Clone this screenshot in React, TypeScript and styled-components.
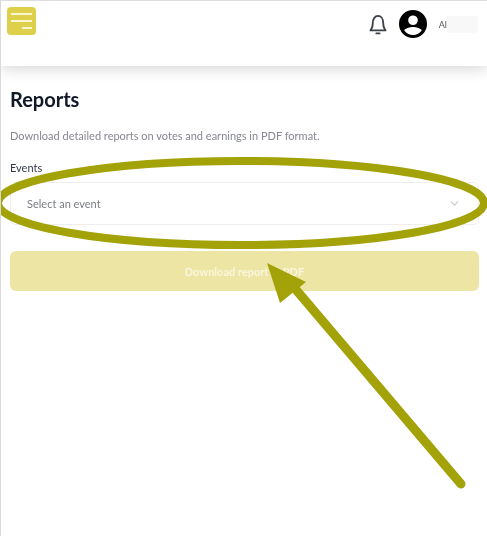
import styled, { createGlobalStyle } from "styled-components";
import { ChevronDown } from "lucide-react";

const GlobalStyle = createGlobalStyle`
    html, body {
        margin: 0;
        padding: 0;
        background: #fff;
    }
    * {
        box-sizing: border-box;
    }
`

const App = () => {
    return (
        <Page>
            <GlobalStyle />
            <Header>
                <MenuButton>
                    <MenuBar />
                    <MenuBar />
                    <MenuBar $short />
                </MenuButton>
                <HeaderRight>
                    <svg width="24" height="24" viewBox="1 1 22 22" fill="none" stroke="#3a3f4a" strokeWidth="1.7" strokeLinecap="round" strokeLinejoin="round">
                        <path d="M5.9 16.500c1-1.300 1.300-2.400 1.300-5.300C7.200 7.300 9.200 4.600 12 4.600s4.800 2.700 4.800 6.600c0 2.900.3 4 1.300 5.300.5.7.8 1.100.8 1.400H5.100c0-.3.3-.7.8-1.400z" />
                        <path d="M10.500 20.600h3" />
                    </svg>
                    <svg width="28" height="28" viewBox="0 0 26 26">
                        <path fill="#000" d="M13 0a13 13 0 1 0 0 26 13 13 0 0 0 0-26zm0 5a4.500 4.500 0 1 1 0 9 4.500 4.500 0 0 1 0-9zm0 18.200c-3.400 0-6.400-1.700-8.200-4.400.9-1.700 5.200-3 8.200-3s7.300 1.300 8.200 3c-1.800 2.700-4.800 4.400-8.200 4.400z" />
                    </svg>
                    <UserName>
                        Al
                        <BlurredName />
                    </UserName>
                </HeaderRight>
            </Header>
            <Main>
                <Title>Reports</Title>
                <Description>Download detailed reports on votes and earnings in PDF format.</Description>
                <Label>Events</Label>
                <Select>
                    Select an event
                    <ChevronDown size={13} color="#c4c6d0" />
                </Select>
                <DownloadButton>Download report in PDF</DownloadButton>
            </Main>
            <Annotation width="487" height="536" viewBox="0 0 487 536">
                <ellipse cx="241" cy="203" rx="243" ry="42" fill="none" stroke="#a3a208" strokeWidth="8" />
                <path d="M461 484L292 285" stroke="#a3a208" strokeWidth="9" strokeLinecap="round" />
                <polygon points="267,263 306,282 280,303" fill="#a3a208" />
            </Annotation>
        </Page>
    )
}

export default App;

const Page = styled.div`
    position: relative;
    width: 487px;
    height: 536px;
    overflow: hidden;
    background: #fff;
    border-left: 1px solid #d9d9d9;
    font-family: Lato, "Liberation Sans", sans-serif;
`

const Header = styled.header`
    height: 66px;
    border-top: 1px solid #dedede;
    padding: 6px 9px 0 6px;
    display: flex;
    justify-content: space-between;
    align-items: flex-start;
    background: #fff;
    box-shadow: 0 3px 14px rgba(0, 0, 0, 0.16);
    filter: blur(0.4px);
`

const MenuButton = styled.div`
    width: 29px;
    height: 28px;
    padding: 6px 4px;
    border-radius: 4px;
    background: #dfd04c;
    display: flex;
    flex-direction: column;
    align-items: flex-end;
    gap: 5px;
`

const MenuBar = styled.span<{ $short?: boolean }>`
    display: block;
    height: 3px;
    width: ${(props) => (props.$short ? "10px" : "100%")};
    background: #fbf7d2;
`

const HeaderRight = styled.div`
    display: flex;
    align-items: center;
    height: 34px;
    gap: 9px;
`

const UserName = styled.div`
    display: flex;
    align-items: center;
    margin-left: 3px;
    font-size: 9px;
    color: #555;
`

const BlurredName = styled.span`
    width: 31px;
    height: 17px;
    background: #f8f8f8;
`

const Main = styled.main`
    padding: 21px 8px 0 9px;
    filter: blur(0.4px);
`

const Title = styled.h1`
    margin: 0;
    font-size: 20px;
    line-height: 24px;
    font-weight: 700;
    color: #111827;
`

const Description = styled.p`
    margin: 17px 0 0;
    font-size: 11px;
    line-height: 16px;
    color: #85888e;
`

const Label = styled.div`
    margin-top: 16px;
    font-size: 11px;
    line-height: 16px;
    color: #333a47;
`

const Select = styled.div`
    margin-top: 6px;
    height: 43px;
    padding: 0 17px 0 16px;
    display: flex;
    align-items: center;
    justify-content: space-between;
    border: 1px solid #eeeeee;
    border-radius: 6px;
    font-size: 11px;
    color: #7a7d85;
`

const DownloadButton = styled.button`
    display: block;
    width: 100%;
    height: 40px;
    margin-top: 26px;
    border: 0;
    border-radius: 6px;
    background: #ede5a3;
    color: #f9f6df;
    font-family: inherit;
    font-size: 11px;
    font-weight: 700;
`

const Annotation = styled.svg`
    position: absolute;
    top: 0;
    left: -1px;
    pointer-events: none;
`
